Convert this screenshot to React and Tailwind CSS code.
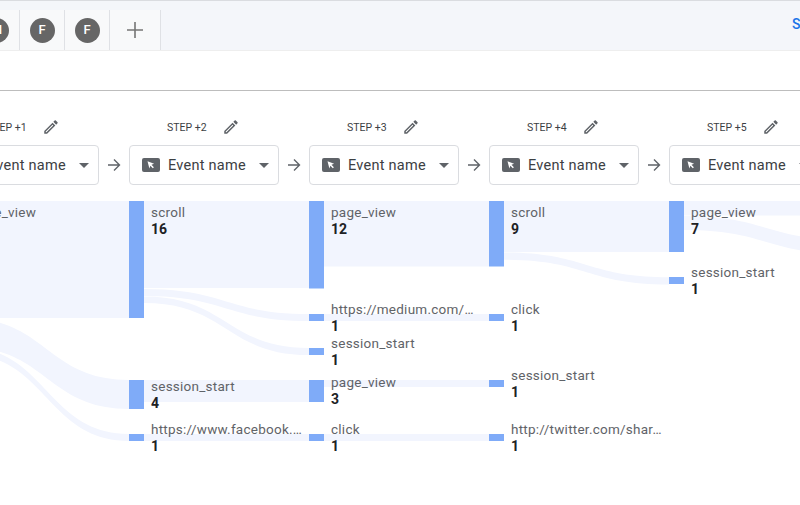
// App.jsx
import React from 'react';

const STEPS = [1, 2, 3, 4, 5];

// chart coordinates are page coordinates, the svg viewBox starts at y=189
const BANDS = [
  [-36, 129, 201, 318, 201, 318],
  [-36, 129, 318, 347, 380, 409],
  [-36, 129, 347, 354, 434, 441],
  [144, 309, 201, 288, 201, 288],
  [144, 309, 289, 296, 314, 321],
  [144, 309, 296.5, 303, 348, 355],
  [144, 309, 380, 402, 380, 402],
  [144, 309, 434, 441, 434, 441],
  [324, 489, 201, 266.5, 201, 266.5],
  [324, 489, 314, 321, 314, 321],
  [324, 489, 380, 387, 380, 387],
  [324, 489, 434, 441, 434, 441],
  [504, 669, 201, 252, 201, 252],
  [504, 669, 252.5, 259.8, 277.3, 284.6],
  [684, 849, 201, 215.5, 201, 215.5],
  [684, 849, 216, 230, 240, 254],
];

const BARS = [
  [129, 201, 117],
  [129, 380, 29],
  [129, 434, 7],
  [309, 201, 87.5],
  [309, 314, 7],
  [309, 348, 7],
  [309, 380, 22],
  [309, 434, 7],
  [489, 201, 65.5],
  [489, 314, 7],
  [489, 380, 7],
  [489, 434, 7],
  [669, 201, 51],
  [669, 277, 7],
];

const LABELS = [
  { x: -29, y: 204, name: 'page_view', count: 21 },
  { x: 151, y: 204, name: 'scroll', count: 16 },
  { x: 151, y: 378, name: 'session_start', count: 4 },
  { x: 151, y: 421, name: 'https://www.facebook.…', count: 1 },
  { x: 331, y: 204, name: 'page_view', count: 12 },
  { x: 331, y: 301, name: 'https://medium.com/…', count: 1 },
  { x: 331, y: 335, name: 'session_start', count: 1 },
  { x: 331, y: 374, name: 'page_view', count: 3 },
  { x: 331, y: 421, name: 'click', count: 1 },
  { x: 511, y: 204, name: 'scroll', count: 9 },
  { x: 511, y: 301, name: 'click', count: 1 },
  { x: 511, y: 367, name: 'session_start', count: 1 },
  { x: 511, y: 421, name: 'http://twitter.com/shar…', count: 1 },
  { x: 691, y: 204, name: 'page_view', count: 7 },
  { x: 691, y: 264, name: 'session_start', count: 1 },
];

const bandPath = ([x0, x1, a0, a1, b0, b1]) => {
  const mid = (x0 + x1) / 2;
  return `M${x0} ${a0}C${mid} ${a0} ${mid} ${b0} ${x1} ${b0}L${x1} ${b1}C${mid} ${b1} ${mid} ${a1} ${x0} ${a1}Z`;
};

const PencilIcon = () => (
  <svg width="18" height="18" viewBox="0 0 24 24" fill="#5f6368">
    <path d="M14.06 9.02l.92.92L5.92 19H5v-.92l9.06-9.06M17.66 3c-.25 0-.51.1-.7.29l-1.83 1.83 3.75 3.75 1.83-1.83c.39-.39.39-1.02 0-1.41l-2.34-2.34c-.2-.2-.45-.29-.71-.29zm-3.6 3.19L3 17.25V21h3.75L17.81 9.94l-3.75-3.75z" />
  </svg>
);

const CursorChip = () => (
  <svg width="18" height="14" viewBox="0 0 18 14">
    <rect width="18" height="14" rx="2" fill="#5f6368" />
    <path d="M5.5 3.2l6.6 2.5-2.6 1 2.4 2.5-1.1 1.1-2.4-2.5-1 2.6z" fill="#fff" />
  </svg>
);

const ArrowIcon = () => (
  <svg width="14" height="14" viewBox="0 0 14 14" fill="none" stroke="#5f6368" strokeWidth="1.4">
    <path d="M1 7h11.5M7 1.5L12.5 7 7 12.5" />
  </svg>
);

const Avatar = ({ letter }) => (
  <div className="flex h-[25px] w-[25px] items-center justify-center rounded-full bg-[#666666] text-[13px] font-medium text-white">
    {letter}
  </div>
);

const Tab = ({ children, className }) => (
  <div className={`flex h-[40px] items-center justify-center border-r border-[#dfe1e5] bg-[#f8f9fa] ${className}`}>
    {children}
  </div>
);

const StepColumn = ({ step }) => (
  <div className="flex w-[150px] shrink-0 flex-col">
    <div className="flex h-[18px] items-center pl-[38px] text-[10.5px] text-[#3c4043]">
      <span className="mt-[2px] w-[55px]">STEP +{step}</span>
      <PencilIcon />
    </div>
    <div className="mt-[9px] flex h-[40px] items-center rounded border border-[#dadce0] bg-white pl-[12px]">
      <CursorChip />
      <span className="ml-[8px] mt-[2px] text-[14.5px] tracking-[0.25px] text-[#3c4043]">Event name</span>
      <span className="ml-[13px] h-0 w-0 border-x-[5.5px] border-t-[5.5px] border-x-transparent border-t-[#5f6368]" />
    </div>
  </div>
);

export default function App() {
  return (
    <div className="flex h-[505px] w-[800px] flex-col overflow-hidden bg-white font-['Roboto',sans-serif]">
      <div className="flex h-[51px] shrink-0 items-end border-b border-[#eeeeee] border-t border-t-[#dadce0] bg-[#f4f6fa]">
        <div className="-ml-[26px] flex">
          <Tab className="w-[46px]"><Avatar letter="M" /></Tab>
          <Tab className="w-[45px]"><Avatar letter="F" /></Tab>
          <Tab className="w-[45px]"><Avatar letter="F" /></Tab>
          <Tab className="w-[51px]">
            <svg width="18" height="18" viewBox="0 0 18 18" stroke="#757575" strokeWidth="1.6">
              <path d="M9 1v16M1 9h16" />
            </svg>
          </Tab>
        </div>
        <div className="mb-[15px] ml-auto w-[8px] overflow-hidden text-[14px] font-medium text-[#1a73e8]">Save</div>
      </div>

      <div className="h-[40px] shrink-0 border-b border-[#bdbdbd]" />

      <div className="-ml-[51px] mt-[27px] flex h-[71px] shrink-0 items-start">
        {STEPS.map((step, i) => (
          <React.Fragment key={step}>
            <StepColumn step={step} />
            {i < STEPS.length - 1 && (
              <div className="mt-[40px] flex w-[30px] shrink-0 justify-center">
                <ArrowIcon />
              </div>
            )}
          </React.Fragment>
        ))}
      </div>

      <div className="relative min-h-0 flex-1 overflow-hidden">
        <svg className="absolute inset-0" width="800" height="316" viewBox="0 189 800 316">
          {BANDS.map((band, i) => (
            <path key={i} d={bandPath(band)} fill="#f2f5fe" />
          ))}
          {BARS.map(([x, y, h], i) => (
            <rect key={i} x={x} y={y} width="15" height={h} fill="#7fabf8" />
          ))}
        </svg>
        {LABELS.map((label, i) => (
          <div
            key={i}
            className="absolute whitespace-nowrap text-[13.5px] leading-[16px] tracking-[0.25px]"
            style={{ left: label.x, top: label.y - 189 }}
          >
            <div className="text-[#5f6368]">{label.name}</div>
            <div className="mt-[1px] text-[14px] font-bold tracking-normal text-[#202124]">{label.count}</div>
          </div>
        ))}
      </div>
    </div>
  );
}
